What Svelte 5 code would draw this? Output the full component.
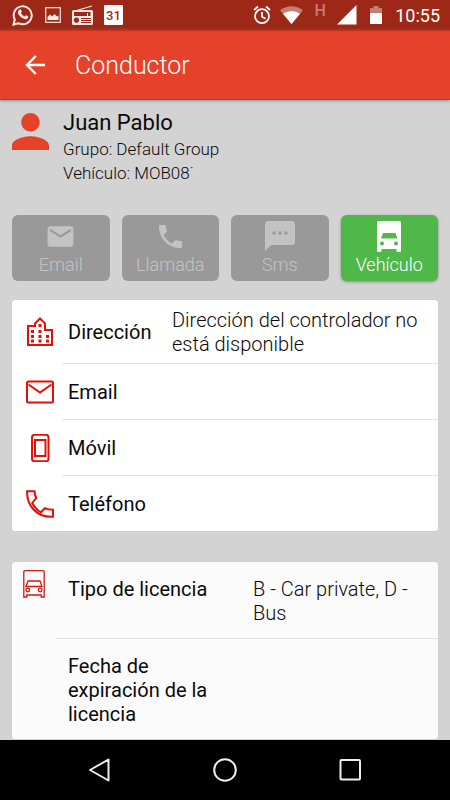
<script lang="ts">
  const driver = {
    name: "Juan Pablo",
    group: "Default Group",
    vehicle: "MOB08˙",
  };

  const actions = [
    { icon: "mail", label: "Email", enabled: false },
    { icon: "call", label: "Llamada", enabled: false },
    { icon: "sms", label: "Sms", enabled: false },
    { icon: "truck", label: "Vehículo", enabled: true },
  ];

  const contact = [
    {
      icon: "building",
      label: "Dirección",
      value: "Dirección del controlador no está disponible",
    },
    { icon: "mail", label: "Email", value: "" },
    { icon: "mobile", label: "Móvil", value: "" },
    { icon: "phone", label: "Teléfono", value: "" },
  ];

  const licence = [
    { icon: "truck", label: "Tipo de licencia", value: "B - Car private, D - Bus" },
    { icon: "", label: "Fecha de expiración de la licencia", value: "" },
  ];
</script>

{#snippet actionIcon(name: string)}
  {#if name === "mail"}
    <svg width="31" height="31" viewBox="0 0 24 24" aria-hidden="true">
      <path d="M20 4H4c-1.1 0-2 .9-2 2v12c0 1.1.9 2 2 2h16c1.1 0 2-.9 2-2V6c0-1.1-.9-2-2-2zm0 4l-8 5-8-5V6l8 5 8-5v2z" />
    </svg>
  {:else if name === "call"}
    <svg width="31" height="31" viewBox="0 0 24 24" aria-hidden="true">
      <path d="M6.62 10.79c1.44 2.83 3.76 5.14 6.59 6.59l2.2-2.2c.27-.27.67-.36 1.02-.24 1.12.37 2.33.57 3.57.57.55 0 1 .45 1 1V20c0 .55-.45 1-1 1-9.39 0-17-7.61-17-17 0-.55.45-1 1-1h3.5c.55 0 1 .45 1 1 0 1.25.2 2.45.57 3.57.11.35.03.74-.25 1.02l-2.2 2.2z" />
    </svg>
  {:else if name === "sms"}
    <svg width="36" height="36" viewBox="0 0 24 24" aria-hidden="true">
      <path d="M20 2H4c-1.1 0-2 .9-2 2v18l4-4h14c1.1 0 2-.9 2-2V4c0-1.1-.9-2-2-2zM9 11H7V9h2v2zm4 0h-2V9h2v2zm4 0h-2V9h2v2z" />
    </svg>
  {:else}
    <svg width="24" height="31" viewBox="0 0 24 31" aria-hidden="true">
      <path
        fill-rule="evenodd"
        d="M1.500 0h21q1.500 0 1.500 1.500V30q0 1-1 1h-2.500q-1 0-1-1v-2H4.500v2q0 1-1 1H1q-1 0-1-1V1.500Q0 0 1.500 0zM6 12L4 17.500h16.500L18.500 12zM5 20.500a2 2 0 1 0 .01 0zM19 20.500a2 2 0 1 0 .01 0z"
      />
    </svg>
  {/if}
{/snippet}

{#snippet rowIcon(name: string)}
  {#if name === "building"}
    <svg width="28" height="30" viewBox="0 0 28 30" aria-hidden="true">
      <path d="M2 28V9h7V6.500l5-5 5 5V13h7v15z" />
      <path class="dots" d="M5 13h3v3H5zM5 18h3v3H5zM5 22.500h3v3H5zM12.500 7h3v3h-3zM12.500 13h3v3h-3zM12.500 18h3v3h-3zM12.500 22.500h3v3h-3zM20 18h3v3h-3zM20 22.500h3v3h-3z" />
    </svg>
  {:else if name === "mail"}
    <svg width="28" height="28" viewBox="0 0 28 28" aria-hidden="true">
      <rect x="1" y="3.500" width="26" height="21" rx="1.500" />
      <path d="M2.500 6.500l11.500 8 11.500-8" />
    </svg>
  {:else if name === "mobile"}
    <svg width="28" height="28" viewBox="0 0 28 28" aria-hidden="true">
      <rect x="6" y="0.800" width="16.500" height="26.500" rx="2.500" />
      <rect x="9" y="6" width="10.500" height="16" />
    </svg>
  {:else if name === "phone"}
    <svg width="28" height="28" viewBox="0 0 28 28" aria-hidden="true">
      <path d="M1 1.200h7.500q.3 3.800 1.700 6.800l-4 5Q9.500 19.500 15 22.300l3.800-4.100q3.600 1.600 8.200 1.600v7Q15 27.500 7.500 19.500 1 12.500 1 1.200z" />
    </svg>
  {:else if name === "truck"}
    <svg class="thin" width="22" height="28" viewBox="0 0 22 28" aria-hidden="true">
      <path d="M.8 27V2Q.8.700 2 .7h18q1.200 0 1.200 1.300v25h-3v-2H3.800v2z" />
      <path d="M3 16.500L5 11h12l2 5.500z" />
      <circle cx="4.800" cy="20" r="1.800" />
      <circle cx="17.200" cy="20" r="1.800" />
    </svg>
  {/if}
{/snippet}

<div class="screen">
  <div class="status">
    <div class="notifications">
      <svg width="22" height="22" viewBox="0 0 22 22" aria-hidden="true">
        <path d="M1.500 20.500l1.300-5A9 9 0 1 1 6.500 19.200z" fill="none" stroke="currentColor" stroke-width="2" />
        <path d="M7.600 5.600c.6-.5 1.200-.3 1.500.3l.7 1.700c.1.500-.7 1.200-.9 1.500.8 1.600 2 2.700 3.700 3.400.5-.3.900-1.300 1.400-1.200l2 1c.5.300.2 1.500-.4 2.100-1.100 1-2.600.9-4.300.2-2.300-1-4.200-3-5.100-4.900-.5-1.400-.2-3 1.400-4.100z" />
      </svg>
      <svg width="16" height="16" viewBox="0 0 16 16" aria-hidden="true">
        <rect x=".7" y=".7" width="14.600" height="14.600" fill="none" stroke="currentColor" stroke-width="1.200" />
        <path d="M2.500 13V10l2.500-2.500 2 2L9.500 7l2.500 2.500 1.500-1V13z" />
      </svg>
      <svg width="21" height="20" viewBox="0 0 21 20" aria-hidden="true">
        <path d="M3 6L20 1" fill="none" stroke="currentColor" stroke-width="1.300" />
        <path
          fill-rule="evenodd"
          d="M2 5h17.500q1.500 0 1.500 1.500v12q0 1.500-1.500 1.500h-18Q0 20 0 18.500V7q0-2 2-2zM2 7v4h13V8h1v3h2.500V7zM4.500 12.500a2.700 2.700 0 1 0 .01 0zM9 13h10v1H9zM9 15h10v1H9zM9 17h10v1H9z"
        />
      </svg>
      <span class="calendar">31</span>
    </div>
    <div class="system">
      <svg width="18" height="20" viewBox="0 0 18 20" fill="none" stroke="currentColor" stroke-width="1.800" aria-hidden="true">
        <circle cx="9" cy="11.200" r="7" />
        <path d="M9 7v4.800l3.500 2M1 5l4-3.500M17 5l-4-3.500" />
      </svg>
      <svg width="23" height="18" viewBox="0 0 23 18" aria-hidden="true">
        <path d="M0 4.300Q11.500-4 23 4.300L11.500 18z" opacity=".4" />
        <path d="M3 7.800Q11.500 2 20 7.800L11.500 18z" />
      </svg>
      <span class="network">H</span>
      <svg width="20" height="20" viewBox="0 0 20 20" aria-hidden="true">
        <path d="M0 19.500L19.500 0v19.500z" />
      </svg>
      <svg width="20" height="18" viewBox="0 0 20 18" aria-hidden="true">
        <path d="M4 2h3.500V0h5v2H16v5H4z" opacity=".4" />
        <path d="M4 7h12v11H4z" />
      </svg>
      <span class="clock">10:55</span>
    </div>
  </div>

  <header>
    <button type="button" class="back" aria-label="Atrás">
      <svg width="20" height="20" viewBox="0 0 20 20" fill="none" stroke="currentColor" stroke-width="2.400" aria-hidden="true">
        <path d="M20 10H2.500M10.800 1L2 10l8.800 9" />
      </svg>
    </button>
    <h1>Conductor</h1>
  </header>

  <main>
    <section class="driver">
      <svg width="37" height="37" viewBox="4 4 16 16" aria-hidden="true">
        <path d="M12 12c2.210 0 4-1.790 4-4s-1.790-4-4-4-4 1.790-4 4 1.790 4 4 4zm0 2c-2.670 0-8 1.340-8 4v2h16v-2c0-2.660-5.330-4-8-4z" />
      </svg>
      <div>
        <h2>{driver.name}</h2>
        <p>Grupo: {driver.group}</p>
        <p>Vehículo: {driver.vehicle}</p>
      </div>
    </section>

    <div class="actions">
      {#each actions as action}
        <button type="button" disabled={!action.enabled}>
          <span class="action-icon">{@render actionIcon(action.icon)}</span>
          {action.label}
        </button>
      {/each}
    </div>

    <section class="card">
      {#each contact as row}
        <div class="row">
          <div class="icon">{@render rowIcon(row.icon)}</div>
          <div class="body">
            <span class="label">{row.label}</span>
            <span class="value">{row.value}</span>
          </div>
        </div>
      {/each}
    </section>

    <section class="card licence">
      {#each licence as row}
        <div class="row">
          <div class="icon">{@render rowIcon(row.icon)}</div>
          <div class="body">
            <span class="label">{row.label}</span>
            <span class="value">{row.value}</span>
          </div>
        </div>
      {/each}
    </section>
  </main>

  <nav>
    <button type="button" aria-label="Volver">
      <svg width="24" height="24" viewBox="0 0 24 24" aria-hidden="true">
        <path d="M21.500 1.500v21L3 12z" />
      </svg>
    </button>
    <button type="button" aria-label="Inicio">
      <svg width="24" height="24" viewBox="0 0 24 24" aria-hidden="true">
        <circle cx="12" cy="12" r="10.800" />
      </svg>
    </button>
    <button type="button" aria-label="Recientes">
      <svg width="24" height="24" viewBox="0 0 24 24" aria-hidden="true">
        <rect x="1.500" y="2" width="19.500" height="19.500" rx="1" />
      </svg>
    </button>
  </nav>
</div>

<style>
  :global(body) {
    background: #d3d3d3;
  }

  .screen {
    display: flex;
    flex-direction: column;
    min-height: 100vh;
    font-family: Roboto, sans-serif;
    color: #0a0a0a;
  }

  svg {
    display: block;
    flex: none;
    fill: currentColor;
  }

  svg[fill="none"] {
    fill: none;
  }

  button {
    margin: 0;
    padding: 0;
    border: 0;
    background: none;
    color: inherit;
    font-family: inherit;
    cursor: pointer;
  }

  h1,
  h2,
  p {
    margin: 0;
  }

  .status {
    display: flex;
    justify-content: space-between;
    height: 30px;
    padding: 0 10px 0 12px;
    background: #9e2817;
    color: #fff;
  }

  .notifications,
  .system {
    display: flex;
    align-items: center;
  }

  .notifications {
    gap: 11px;
    color: #fbe9e6;
  }

  .system {
    gap: 9px;
  }

  .calendar {
    width: 19px;
    height: 20px;
    border-radius: 1px;
    background: #fff;
    color: #9e2817;
    font-size: 13px;
    font-weight: 500;
    line-height: 22px;
    text-align: center;
  }

  .network {
    width: 16px;
    height: 20px;
    color: #c67c70;
    font-size: 16px;
    font-weight: 500;
    line-height: 12px;
    text-align: center;
  }

  .clock {
    font-size: 18px;
    font-weight: 400;
  }

  header {
    z-index: 1;
    display: flex;
    align-items: center;
    gap: 30px;
    height: 70px;
    padding: 0 25px;
    background: #e64229;
    box-shadow:
      inset 0 2px 1px -1px #b9341f,
      inset 0 -1px #d92f18,
      0 1px 3px #7f9492;
    color: #fff;
  }

  h1 {
    font-size: 25px;
    font-weight: 300;
    line-height: 34px;
    padding-top: 2px;
  }

  main {
    flex: 1;
    padding: 9px 12px 0;
  }

  .driver {
    display: flex;
    gap: 14px;
    padding-bottom: 30px;
  }

  .driver svg {
    margin-top: 4px;
    color: #e64229;
  }

  h2 {
    font-size: 22px;
    font-weight: 400;
    line-height: 28px;
  }

  p {
    font-size: 17px;
    font-weight: 300;
    line-height: 24px;
  }

  .actions {
    display: grid;
    grid-template-columns: repeat(4, 1fr);
    gap: 12px;
  }

  .actions button {
    display: flex;
    flex-direction: column;
    align-items: center;
    padding: 3px 0 5px;
    border-radius: 6px;
    background: #50b848;
    box-shadow: 0 1px 3px #8a8a8a;
    color: #fff;
    font-size: 18px;
    font-weight: 300;
    line-height: 22px;
  }

  .actions button:disabled {
    background: #999;
    box-shadow: none;
    color: #c3c3c3;
    cursor: default;
  }

  .action-icon {
    display: flex;
    align-items: center;
    height: 36px;
  }

  .card {
    margin-top: 19px;
    border-radius: 3px;
    background: #fff;
    box-shadow: 0 0 1px #bbb;
    font-size: 20px;
    line-height: 24px;
  }

  .row {
    display: flex;
  }

  .icon {
    display: flex;
    flex: none;
    align-items: center;
    box-sizing: border-box;
    width: 50px;
    padding-left: 14px;
    color: #e60f05;
  }

  .icon svg {
    fill: none;
    stroke: currentColor;
    stroke-width: 2;
  }

  .icon .thin {
    color: #cf1a12;
    stroke-width: 1.3;
  }

  .icon .dots {
    fill: currentColor;
    stroke: none;
  }

  .body {
    display: flex;
    flex: 1;
    align-items: center;
    box-sizing: border-box;
    min-height: 56px;
    padding: 8px 12px 7px 6px;
    border-bottom: 1px solid #e4e4e4;
  }

  .row:last-child .body {
    min-height: 55px;
    border-bottom: 0;
  }

  .label {
    flex: none;
    width: 104px;
  }

  .value {
    font-weight: 300;
  }

  .licence {
    margin-top: 31px;
    background: #fbfbfb;
  }

  .licence .icon {
    align-items: flex-start;
    width: 43px;
    padding: 8px 0 0 11px;
  }

  .licence .body {
    align-items: flex-start;
    padding: 15px 12px 13px 13px;
  }

  .licence .label {
    width: 160px;
    margin-right: 25px;
  }

  nav {
    display: flex;
    justify-content: center;
    height: 60px;
    background: #000;
    color: #eee;
  }

  nav button {
    display: flex;
    align-items: center;
    justify-content: center;
    width: 28%;
  }

  nav svg {
    fill: none;
    stroke: currentColor;
    stroke-width: 2;
    stroke-linejoin: round;
  }
</style>
